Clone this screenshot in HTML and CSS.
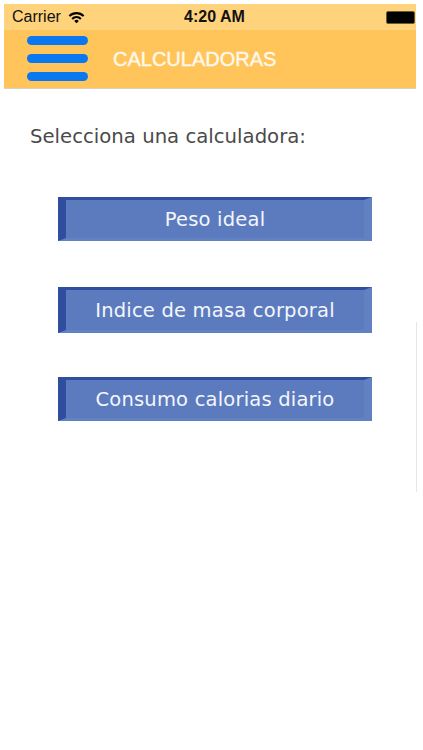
FILE: index.html
```html
<!DOCTYPE html>
<html lang="en">
<head>
    <meta charset="UTF-8">
    <title>Calculadoras</title>
    <link rel="stylesheet" href="styles.css">
</head>
<body>

<div class="screen">
    <div class="status_bar">
        <div class="status_left">
            <span>Carrier</span>
            <svg class="wifi" width="17" height="13" viewBox="0 0 16 12">
                <path d="M0.6 4 A10.4 10.4 0 0 1 15.4 4 L14 5.4 A8.4 8.4 0 0 0 2 5.4 Z" fill="#000"/>
                <path d="M3.2 6.6 A6.8 6.8 0 0 1 12.8 6.6 L11.4 8 A4.8 4.8 0 0 0 4.6 8 Z" fill="#000"/>
                <path d="M5.8 9.2 A3.1 3.1 0 0 1 10.2 9.2 L8 11.5 Z" fill="#000"/>
            </svg>
        </div>
        <div class="status_time">4:20 AM</div>
        <div class="battery"></div>
    </div>

    <div class="nav_bar">
        <div class="menu_icon">
            <div class="menu_line"></div>
            <div class="menu_line"></div>
            <div class="menu_line"></div>
        </div>
        <div class="nav_title">CALCULADORAS</div>
    </div>

    <div class="content">
        <div class="prompt">Selecciona una calculadora:</div>
        <div class="calc_list">
            <div class="calc_button">Peso ideal</div>
            <div class="calc_button calc_button_tall">Indice de masa corporal</div>
            <div class="calc_button">Consumo calorias diario</div>
        </div>
    </div>

    <div class="scroll_line"></div>
</div>

</body>
</html>
```

FILE: styles.css
```css
html, body {
    margin: 0;
    background: #FFFFFF;
}

body {
    width: 423px;
    height: 750px;
    overflow: hidden;
    font-family: "Liberation Sans", Arial, sans-serif;
}

.screen {
    position: relative;
    width: 412px;
    height: 746px;
    margin: 4px 0 0 4px;
}

.status_bar {
    height: 26px;
    background: #FFD27C;
    display: flex;
    align-items: center;
    justify-content: space-between;
    padding: 0 1px 0 8px;
    position: relative;
    font-size: 16px;
    color: #111111;
}

.status_left {
    display: flex;
    align-items: center;
    gap: 7px;
}

.wifi {
    display: block;
}

.status_time {
    position: absolute;
    left: 180px;
    font-weight: bold;
}

.battery {
    width: 27px;
    height: 11px;
    background: #000000;
    border: 1px solid #6B5A30;
    border-radius: 2px;
}

.nav_bar {
    height: 58px;
    background: #FFC55A;
    border-bottom: 1px solid #D9D2C0;
    display: flex;
    align-items: center;
}

.menu_icon {
    width: 61px;
    margin: -2px 0 0 23px;
    display: flex;
    flex-direction: column;
    gap: 9px;
}

.menu_line {
    height: 9px;
    background: #0A78F0;
    border-radius: 5px;
}

.nav_title {
    margin-left: 25px;
    font-size: 20px;
    color: #FFF8EA;
    -webkit-text-stroke: 0.4px #FFF8EA;
}

.content {
    padding: 35px 0 0 26px;
}

.prompt {
    font-family: "DejaVu Sans", Verdana, sans-serif;
    font-size: 19.7px;
    line-height: 26px;
    color: #4A4A4A;
}

.calc_list {
    margin: 47px 0 0 28px;
    display: grid;
    grid-auto-rows: 90px;
    align-items: start;
}

.calc_button {
    box-sizing: border-box;
    width: 314px;
    height: 44px;
    background: #5C7BBF;
    border-style: solid;
    border-width: 3px 8px 3px 8px;
    border-color: #30509F #6181C1 #6382C4 #2F4E9F;
    display: flex;
    align-items: center;
    justify-content: center;
    font-family: "DejaVu Sans", Verdana, sans-serif;
    font-size: 19.5px;
    letter-spacing: 0.2px;
    color: #F4F6FB;
}

.calc_button_tall {
    height: 46px;
}

.scroll_line {
    position: absolute;
    left: 412px;
    top: 318px;
    width: 1px;
    height: 170px;
    background: #E6E6E6;
}
```
